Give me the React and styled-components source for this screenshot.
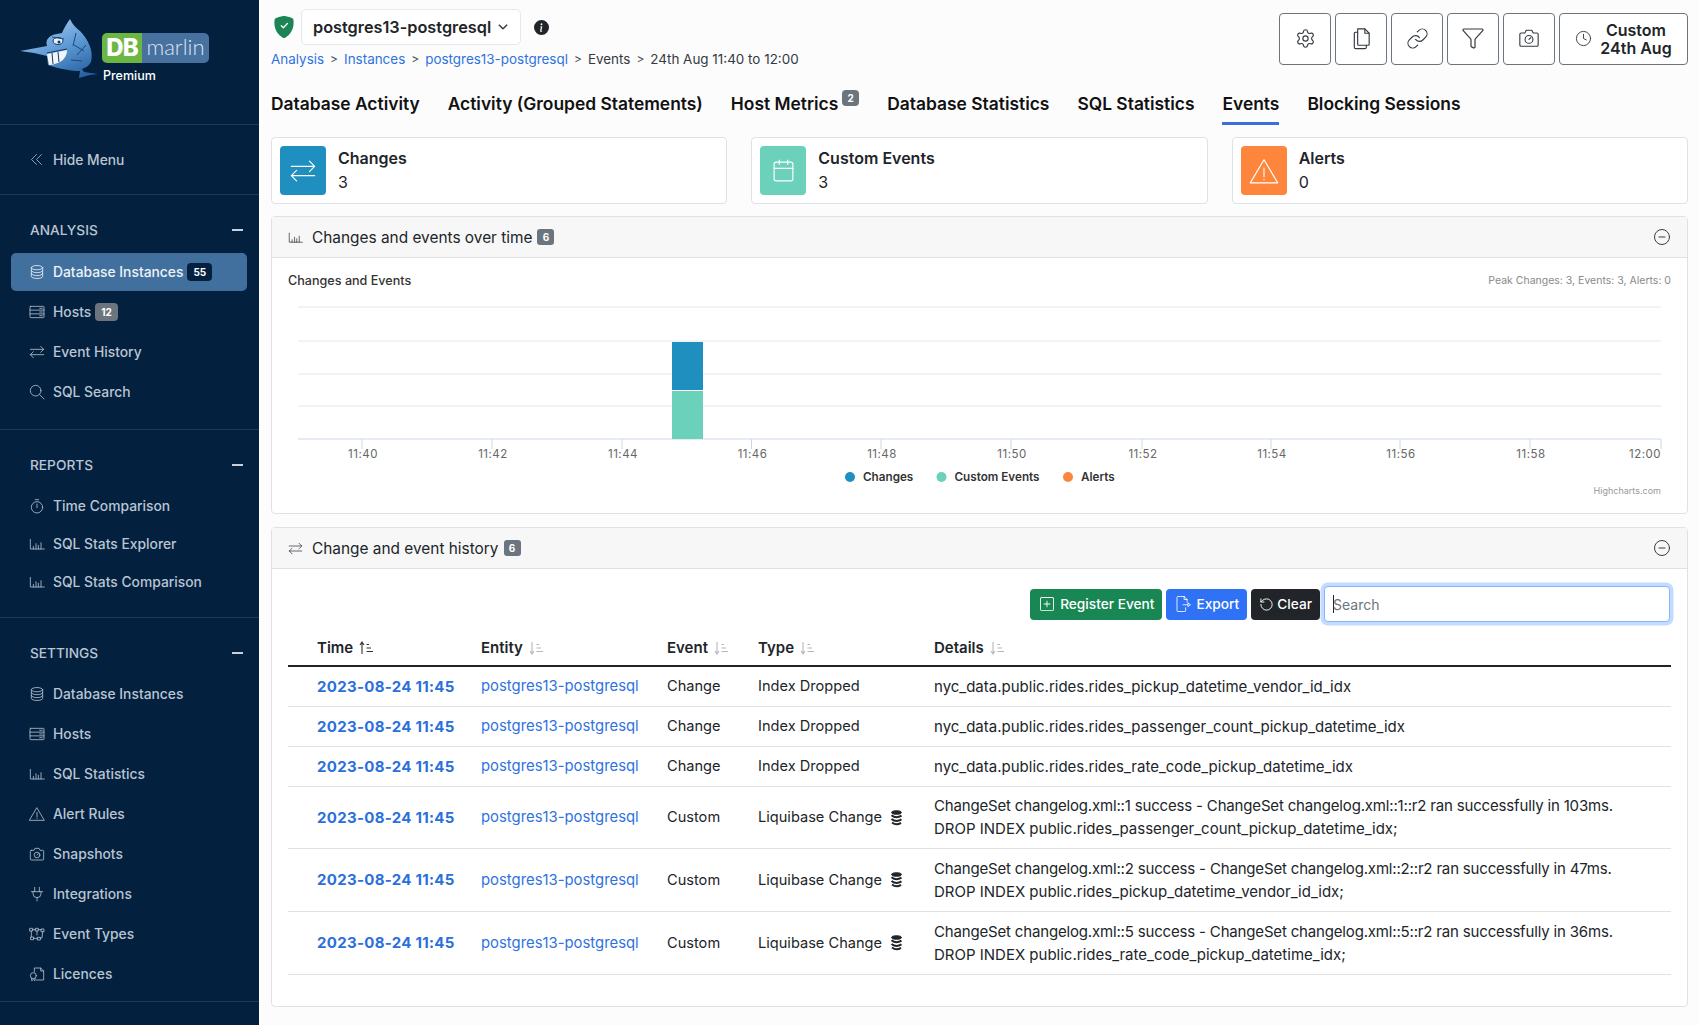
import React from "react";
import styled, { createGlobalStyle } from "styled-components";
import { BsShieldFillCheck, BsInfoCircleFill, BsChevronDown, BsPlusSquare } from "react-icons/bs";
import { Settings, Link, Funnel, Clock, CircleMinus, Calendar, RotateCcw } from "lucide-react";

const GlobalStyle = createGlobalStyle`
  html, body {
    margin: 0;
    padding: 0;
    height: 100%;
    overflow: hidden;
    background: #fcfcfd;
    font-family: Inter, "Liberation Sans", sans-serif;
    color: #212529;
  }
  * { box-sizing: border-box; }
`;

const Page = styled.div`
  display: flex;
  height: 1025px;
`;

/* sidebar */
const Sidebar = styled.aside`
  width: 259px;
  flex: none;
  background: #03203e;
  color: #b9c5d3;
`;

const LogoArea = styled.div`
  height: 125px;
  padding: 15px 0 0 14px;
  display: flex;
  border-bottom: 1px solid #1f3a57;
`;

const LogoRight = styled.div`
  margin-top: 18px;
`;

const LogoBadge = styled.div`
  display: flex;
  width: 107px;
  height: 30px;
  border-radius: 5px;
  overflow: hidden;
`;

const LogoDb = styled.div`
  width: 40px;
  background: #6cb644;
  color: #fff;
  font-weight: 800;
  font-size: 24px;
  line-height: 30px;
  text-align: center;
  letter-spacing: -1px;
`;

const LogoName = styled.div`
  flex: 1;
  background: #47719f;
  color: #dce6f0;
  font-family: Lato, sans-serif;
  font-weight: 300;
  font-size: 22px;
  line-height: 28px;
  text-align: center;
`;

const Premium = styled.div`
  margin: 5px 0 0 1px;
  font-size: 12.5px;
  line-height: 16px;
  font-weight: 500;
  color: #fff;
`;

const HideRow = styled.div`
  height: 70px;
  padding-left: 29px;
  display: flex;
  align-items: center;
  gap: 9px;
  font-size: 13.8px;
  font-weight: 500;
  border-bottom: 1px solid #1f3a57;
`;

const Section = styled.section`
  padding: 20px 0 ${(p) => p.$bottom}px;
  border-bottom: 1px solid #1f3a57;
`;

const SectionHead = styled.div`
  height: 30px;
  padding: 0 16px 0 30px;
  display: flex;
  align-items: center;
  justify-content: space-between;
  font-size: 13.7px;
  font-weight: 500;
  margin-bottom: ${(p) => p.$gap}px;
`;

const Dash = styled.span`
  width: 11px;
  height: 1.5px;
  background: #c5d0dc;
`;

const MenuItem = styled.div`
  height: ${(p) => p.$h}px;
  display: flex;
  align-items: center;
  padding: 0 29px;
  gap: 8px;
  font-size: 13.85px;
  font-weight: 500;
  white-space: nowrap;
  position: relative;
  color: ${(p) => (p.$active ? "#eef3f8" : "#b9c5d3")};
  &::before {
    content: "";
    display: ${(p) => (p.$active ? "block" : "none")};
    position: absolute;
    left: 11px;
    right: 12px;
    top: 1px;
    bottom: 1px;
    background: #41709f;
    border-radius: 5px;
  }
  > * {
    position: relative;
  }
`;

const MenuBadge = styled.span`
  margin-left: -4px;
  padding: 0 6px;
  height: 18px;
  line-height: 18px;
  border-radius: 4px;
  font-size: 10px;
  font-weight: 700;
  color: #fff;
  background: ${(p) => (p.$dark ? "#03203e" : "#6c757d")};
`;

const Glyph = styled.svg`
  width: ${(p) => p.$size || 16}px;
  height: ${(p) => p.$size || 16}px;
  flex: none;
  fill: none;
  stroke: currentColor;
  stroke-width: ${(p) => p.$stroke || 1.2};
  stroke-linecap: round;
  stroke-linejoin: round;
`;

const Line = ({ size, stroke, children }) => (
  <Glyph viewBox="0 0 24 24" $size={size} $stroke={stroke}>
    {children}
  </Glyph>
);

const ChevronsIcon = (p) => (
  <Line {...p}><path d="M12 4 4 12l8 8M20 4l-8 8 8 8" /></Line>
);
const DatabaseIcon = (p) => (
  <Line {...p}>
    <ellipse cx="12" cy="5.5" rx="8.5" ry="3.2" />
    <path d="M3.5 5.5v13c0 1.8 3.8 3.2 8.5 3.2s8.5-1.4 8.5-3.2v-13" />
    <path d="M3.5 9.8c0 1.8 3.8 3.2 8.5 3.2s8.5-1.4 8.5-3.2M3.5 14.2c0 1.8 3.8 3.2 8.5 3.2s8.5-1.4 8.5-3.2" />
  </Line>
);
const ServerIcon = (p) => (
  <Line {...p}>
    <rect x="1.5" y="3.5" width="21" height="17" rx="1" />
    <path d="M1.5 9.2h21M1.5 14.8h21M16 6.4h4M16 12h4M16 17.6h4" />
  </Line>
);
const SwapIcon = (p) => (
  <Line {...p}><path d="M2 8h20M17.5 3.5 22 8l-4.5 4.5M22 16H2M6.5 11.5 2 16l4.5 4.5" /></Line>
);
const SearchIcon = (p) => (
  <Line {...p}>
    <circle cx="10" cy="10" r="8" />
    <path d="m16 16 6.5 6.5" />
  </Line>
);
const TimerIcon = (p) => (
  <Line {...p}>
    <circle cx="12" cy="14" r="8.5" />
    <path d="M9.5 2.5h5M12 9v5.5" />
  </Line>
);
const BarsIcon = (p) => (
  <Line {...p}><path d="M2 5v14.5h21M6.5 15.5v4M10.5 11.5v8M14 14v5.5M18 10v9.5" /></Line>
);
const AlertIcon = (p) => (
  <Line {...p}>
    <path d="M12 3 23 21.5H1z" />
    <path d="M12 9.5v7M12 18.8v.2" />
  </Line>
);
const CameraIcon = (p) => (
  <Line {...p}>
    <path d="M3.5 6.5h4l1.5-3h6l1.5 3h4A1.5 1.5 0 0 1 22 8v11.5a1.5 1.5 0 0 1-1.5 1.5h-17A1.5 1.5 0 0 1 2 19.5V8a1.5 1.5 0 0 1 1.5-1.5z" />
    <circle cx="12" cy="13.5" r="4.3" />
    <path d="M12 13.5l2-2" />
  </Line>
);
const PlugIcon = (p) => (
  <Line {...p}>
    <path d="M8.5 2v6.5M15.5 2v6.5M3.5 8.5h17M6 8.5v3a6 6 0 0 0 12 0v-3M12 17.5v5" />
  </Line>
);
const ObjectsIcon = (p) => (
  <Line {...p}>
    <path d="M1.5 3.5h4v4h-4zM10 3.5h4v4h-4zM18.5 4.5h4v4h-4zM3 16.5h4v4H3zM13 17h4v4h-4z" />
    <path d="M5.5 5.5H10M14 5.5h4.5M3.5 7.5v9M20.5 8.5l-1 9.5H17M7 18.5h6M12 7.5v6" />
  </Line>
);
const LicenceIcon = (p) => (
  <Line {...p}>
    <path d="M8 9V3h9.5L22 7.5V21H11" />
    <path d="M17.5 3v4.5H22" />
    <circle cx="6.5" cy="14.5" r="4.5" />
    <path d="M4 18.5V22l2.5-1.5L9 22v-3.5" />
  </Line>
);
const CopyIcon = (p) => (
  <Line {...p}>
    <path d="M8 2h7.5L20 6.5V18a1 1 0 0 1-1 1H9a1 1 0 0 1-1-1z" />
    <path d="M15.5 2v4.5H20M8 5.5H5.5a1 1 0 0 0-1 1V21A1.5 1.5 0 0 0 6 22.5h9.5A1.5 1.5 0 0 0 17 21v-2" />
  </Line>
);
const ExportIcon = (p) => (
  <Line {...p}>
    <path d="M13.5 2H5a1 1 0 0 0-1 1v18a1 1 0 0 0 1 1h9.5a1 1 0 0 0 1-1v-4M13.5 2l4 4v3.5M13.5 2v4h4" />
    <path d="M12 13h6.5v-2.5L22 13l-3.5 2.5V13" />
  </Line>
);

const SortSvg = styled.svg`
  width: 16px;
  height: 16px;
  margin-left: 5px;
  vertical-align: -3px;
  fill: none;
  stroke: ${(p) => (p.$on ? "#333" : "#b4b8bd")};
  stroke-width: 1.1;
`;

const SortIcon = ({ dir, on }) => (
  <SortSvg viewBox="0 0 16 16" $on={on}>
    {dir === "up" ? <path d="M4 14V2M2 5l2-3 2 3" /> : <path d="M4 2v12M2 11l2 3 2-3" />}
    <path d="M8.5 4.5H11M8.5 8H13M8.5 11.5H15" />
  </SortSvg>
);

const Marlin = () => (
  <svg width="88" height="70" viewBox="0 0 88 70">
    <defs>
      <linearGradient id="fish" x1="0.2" y1="0" x2="0.8" y2="1">
        <stop offset="0" stopColor="#a8cdee" />
        <stop offset="0.5" stopColor="#5f9ad6" />
        <stop offset="1" stopColor="#24609f" />
      </linearGradient>
    </defs>
    <path
      d="M6 36 33 31C31 25 35 20 43 19L48 18C50 13 53 8 56 4 58 9 62 13 66 16 74 24 80 36 77 47 75 51 71 53 68 54L70 57 84 59 76 60 65 63 66 56C58 56 46 54 34 50L33 41 20 38z"
      fill="url(#fish)"
    />
    <path d="M33 39 53 35C53 43 47 49 35 50z" fill="#f2f5f8" />
    <path d="M33 38 53 34M38 38 39 49M44 37 45 47" stroke="#123a66" strokeWidth="1" fill="none" />
    <ellipse cx="44" cy="26" rx="5" ry="3.5" fill="#e6edf3" stroke="#123a66" />
    <circle cx="45" cy="27" r="1.5" fill="#123a66" />
    <path d="M38 22 50 24M62 18 59 31M72 30 63 40M68 46 57 45M60 30 70 36" stroke="#1a4a7e" strokeWidth="1" fill="none" />
  </svg>
);

const NavGroup = ({ items, h }) =>
  items.map((it) => (
    <MenuItem key={it.label} $h={h} $active={it.active}>
      <it.icon />
      <span>{it.label}</span>
      {it.badge && <MenuBadge $dark={it.active}>{it.badge}</MenuBadge>}
    </MenuItem>
  ));

const analysisNav = [
  { label: "Database Instances", icon: DatabaseIcon, badge: "55", active: true },
  { label: "Hosts", icon: ServerIcon, badge: "12" },
  { label: "Event History", icon: SwapIcon },
  { label: "SQL Search", icon: SearchIcon },
];
const reportsNav = [
  { label: "Time Comparison", icon: TimerIcon },
  { label: "SQL Stats Explorer", icon: BarsIcon },
  { label: "SQL Stats Comparison", icon: BarsIcon },
];
const settingsNav = [
  { label: "Database Instances", icon: DatabaseIcon },
  { label: "Hosts", icon: ServerIcon },
  { label: "SQL Statistics", icon: BarsIcon },
  { label: "Alert Rules", icon: AlertIcon },
  { label: "Snapshots", icon: CameraIcon },
  { label: "Integrations", icon: PlugIcon },
  { label: "Event Types", icon: ObjectsIcon },
  { label: "Licences", icon: LicenceIcon },
];

/* main */
const Main = styled.main`
  flex: 1;
  min-width: 0;
  padding: 0 11px 0 12px;
`;

const Header = styled.header`
  height: 85px;
  display: flex;
  justify-content: space-between;
`;

const SelectRow = styled.div`
  display: flex;
  align-items: center;
  height: 36px;
  margin-top: 9px;
  padding-left: 2px;
`;

const Shield = styled(BsShieldFillCheck)`
  color: #1a8457;
  font-size: 22px;
`;

const DbSelect = styled.div`
  width: 220px;
  height: 36px;
  margin-left: 6px;
  padding: 0 12px 0 11px;
  display: flex;
  align-items: center;
  justify-content: space-between;
  background: #fff;
  border: 1px solid #e6e8eb;
  border-radius: 5px;
  font-size: 16.3px;
  font-weight: 600;
`;

const InfoDot = styled(BsInfoCircleFill)`
  margin-left: 13px;
  font-size: 15px;
  color: #212529;
`;

const Crumbs = styled.nav`
  margin-top: 5px;
  display: flex;
  align-items: center;
  font-size: 13.45px;
  line-height: 18px;
`;

const Crumb = styled.span`
  color: ${(p) => (p.$link ? "#2f72e0" : "#343a40")};
`;

const CrumbSep = styled.span`
  margin: 0 6px;
  color: #495057;
  font-size: 12px;
`;

const Actions = styled.div`
  display: flex;
  gap: 4px;
  margin-top: 13px;
  height: 52px;
`;

const ActionBtn = styled.div`
  width: ${(p) => p.$w || 52}px;
  padding-bottom: 2px;
  display: flex;
  align-items: center;
  justify-content: center;
  gap: 8px;
  background: #fff;
  border: 1px solid #6c757d;
  border-radius: 4px;
  color: #343a40;
`;

const DateText = styled.div`
  margin-top: 2px;
  font-size: 16px;
  line-height: 18px;
  font-weight: 600;
  text-align: center;
  color: #212529;
`;

const Tabs = styled.div`
  height: 40px;
  display: flex;
  gap: 28px;
`;

const Tab = styled.div`
  height: 40px;
  display: flex;
  align-items: flex-start;
  padding-top: 8px;
  font-size: 17.4px;
  line-height: 22px;
  font-weight: 600;
  color: #111;
  white-space: nowrap;
  border-bottom: 3px solid ${(p) => (p.$active ? "#3a6fdc" : "transparent")};
`;

const TabBadge = styled.span`
  margin: -3px 0 0 4px;
  width: 17px;
  height: 16px;
  line-height: 16px;
  text-align: center;
  border-radius: 4px;
  background: #6c757d;
  color: #fff;
  font-size: 10px;
  font-weight: 700;
`;

const Cards = styled.div`
  display: grid;
  grid-template-columns: repeat(3, 1fr);
  gap: 24px;
  margin-top: 12px;
`;

const Card = styled.div`
  height: 67px;
  padding: 8px;
  display: flex;
  gap: 12px;
  background: #fff;
  border: 1px solid #dee2e6;
  border-radius: 4px;
`;

const CardIcon = styled.div`
  width: 46px;
  height: 49px;
  display: flex;
  align-items: center;
  justify-content: center;
  border-radius: 4px;
  color: #fff;
  background: ${(p) => p.$bg};
`;

const CardTitle = styled.div`
  font-size: 16px;
  line-height: 24px;
  font-weight: 600;
`;

const CardValue = styled.div`
  font-size: 16px;
  line-height: 24px;
`;

const Panel = styled.section`
  margin-top: ${(p) => p.$top}px;
  height: ${(p) => p.$h}px;
  background: #fff;
  border: 1px solid #dee2e6;
  border-radius: 4px;
`;

const PanelHead = styled.div`
  height: 41px;
  padding: 0 16px;
  display: flex;
  align-items: center;
  gap: 9px;
  background: #f7f7f7;
  border-bottom: 1px solid #dee2e6;
  color: #343a40;
  font-size: 15.4px;
`;

const PanelTitle = styled.span`
  display: flex;
  align-items: center;
  gap: 5px;
  flex: 1;
  color: #212529;
`;

const CountBadge = styled.span`
  width: 17px;
  height: 16px;
  line-height: 16px;
  text-align: center;
  border-radius: 3px;
  background: #6c757d;
  color: #fff;
  font-size: 10px;
  font-weight: 700;
`;

const ChartSvg = styled.svg`
  display: block;
  font-family: Inter, sans-serif;
`;

const gridLines = [49, 83, 116, 148];
const tickX = [90, 220, 350, 479.5, 609, 739, 870, 999, 1128, 1258, 1389];
const tickLabels = ["11:40", "11:42", "11:44", "11:46", "11:48", "11:50", "11:52", "11:54", "11:56", "11:58", "12:00"];
const legend = [
  { label: "Changes", color: "#1f8fbf", x: 578 },
  { label: "Custom Events", color: "#6bd1bb", x: 669.5 },
  { label: "Alerts", color: "#fd853c", x: 796 },
];

const EventsChart = () => (
  <ChartSvg width="1415" height="255" viewBox="0 0 1415 255">
    <text x="16" y="27" fontSize="12.6" fontWeight="500" fill="#333">Changes and Events</text>
    <text x="1399" y="26" fontSize="10.5" textAnchor="end" fill="#8a8a8a">Peak Changes: 3, Events: 3, Alerts: 0</text>
    {gridLines.map((y) => (
      <line key={y} x1="26" x2="1389" y1={y} y2={y} stroke="#e6e6e6" />
    ))}
    <line x1="26" x2="1389" y1="181" y2="181" stroke="#ccd6eb" />
    {tickX.map((x, i) => (
      <g key={x}>
        <line x1={x} x2={x} y1="181" y2="191" stroke="#ccd6eb" />
        <text x={i === 10 ? 1373 : x + 1} y="200" fontSize="11.5" letterSpacing="0.5" textAnchor="middle" fill="#666">{tickLabels[i]}</text>
      </g>
    ))}
    <rect x="400" y="84" width="31" height="48" fill="#1f8fbf" />
    <rect x="400" y="133" width="31" height="48" fill="#6bd1bb" />
    {legend.map((l) => (
      <g key={l.label}>
        <circle cx={l.x} cy="219" r="5" fill={l.color} />
        <text x={l.x + 13} y="223" fontSize="11.7" fontWeight="600" fill="#333">{l.label}</text>
      </g>
    ))}
    <text x="1389" y="236" fontSize="9" textAnchor="end" fill="#999">Highcharts.com</text>
  </ChartSvg>
);

const Toolbar = styled.div`
  height: 36px;
  margin: 17px 17px 0 16px;
  display: flex;
  align-items: center;
  justify-content: flex-end;
  gap: 4px;
`;

const ToolBtn = styled.div`
  height: 31px;
  padding: 0 8px 0 ${(p) => p.$left || 10}px;
  display: flex;
  align-items: center;
  gap: ${(p) => p.$gap || 6}px;
  border-radius: 4px;
  background: ${(p) => p.$bg};
  color: #fff;
  font-size: 13.7px;
  font-weight: 500;
  white-space: nowrap;
`;

const SearchWrap = styled.div`
  position: relative;
  width: 346px;
  height: 36px;
`;

const SearchBox = styled.input`
  display: block;
  width: 100%;
  height: 100%;
  padding: 0 8px;
  border: 1px solid #86b7fe;
  border-radius: 4px;
  box-shadow: 0 0 0 3.5px #c2dbfe;
  outline: none;
  background: #fff;
  font: 14px Inter, sans-serif;
  &::placeholder {
    color: #6c757d;
  }
`;

const Caret = styled.span`
  position: absolute;
  left: 9px;
  top: 9px;
  width: 1px;
  height: 18px;
  background: #212529;
`;

const Table = styled.table`
  width: 1383px;
  margin: 4px 0 0 16px;
  border-collapse: collapse;
  table-layout: fixed;
  font-size: 14.6px;
`;

const Th = styled.th`
  height: 40px;
  padding: 3px 0 0 ${(p) => p.$pad || 0}px;
  text-align: left;
  font-size: 15px;
  font-weight: 600;
  border-bottom: 2px solid #212529;
`;

const Tr = styled.tr`
  height: ${(p) => p.$h}px;
  border-bottom: 1px solid #dee2e6;
`;

const Td = styled.td`
  padding: 1px 0 0 ${(p) => p.$pad || 0}px;
  line-height: 23px;
  color: #212529;
`;

const DetailCell = styled.td`
  padding: 0;
  line-height: 23px;
  color: #212529;
`;

const DateLink = styled.a`
  font-size: 15px;
  font-weight: 700;
  letter-spacing: 0.3px;
  color: #2a6fdb;
`;

const EntityLink = styled.a`
  font-size: 14.85px;
  color: #2f72e0;
`;

const TypeCell = styled.span`
  display: inline-flex;
  align-items: center;
  gap: 8px;
`;

const DetailLine = styled.div`
  font-size: 15px;
  letter-spacing: ${(p) => (p.$tight ? "-0.17px" : "0")};
`;

const Liquibase = () => (
  <svg width="13" height="16" viewBox="0 0 13 16" fill="none" stroke="#212529" strokeWidth="2">
    <ellipse cx="6.5" cy="2.5" rx="5" ry="1.8" fill="#212529" strokeWidth="1" />
    <path d="M1.5 5.2c3 2.5 7 2.3 10 .4M1.5 9c3 2.5 7 2.3 10 .4M2 12.5c3 2.5 6 2.3 9 .4" />
  </svg>
);

const rows = [
  { kind: "Change", type: "Index Dropped", h: 40, details: ["nyc_data.public.rides.rides_pickup_datetime_vendor_id_idx"] },
  { kind: "Change", type: "Index Dropped", h: 40, details: ["nyc_data.public.rides.rides_passenger_count_pickup_datetime_idx"] },
  { kind: "Change", type: "Index Dropped", h: 40, details: ["nyc_data.public.rides.rides_rate_code_pickup_datetime_idx"] },
  {
    kind: "Custom", type: "Liquibase Change", h: 62,
    details: ["ChangeSet changelog.xml::1 success - ChangeSet changelog.xml::1::r2 ran successfully in 103ms.", "DROP INDEX public.rides_passenger_count_pickup_datetime_idx;"],
  },
  {
    kind: "Custom", type: "Liquibase Change", h: 63,
    details: ["ChangeSet changelog.xml::2 success - ChangeSet changelog.xml::2::r2 ran successfully in 47ms.", "DROP INDEX public.rides_pickup_datetime_vendor_id_idx;"],
  },
  {
    kind: "Custom", type: "Liquibase Change", h: 63,
    details: ["ChangeSet changelog.xml::5 success - ChangeSet changelog.xml::5::r2 ran successfully in 36ms.", "DROP INDEX public.rides_rate_code_pickup_datetime_idx;"],
  },
];

const crumbs = [
  { text: "Analysis", link: true },
  { text: "Instances", link: true },
  { text: "postgres13-postgresql", link: true },
  { text: "Events" },
  { text: "24th Aug 11:40 to 12:00" },
];

const tabs = ["Database Activity", "Activity (Grouped Statements)", "Host Metrics", "Database Statistics", "SQL Statistics", "Events", "Blocking Sessions"];

const App = () => (
  <Page>
    <GlobalStyle />
    <Sidebar>
      <LogoArea>
        <Marlin />
        <LogoRight>
          <LogoBadge>
            <LogoDb>DB</LogoDb>
            <LogoName>marlin</LogoName>
          </LogoBadge>
          <Premium>Premium</Premium>
        </LogoRight>
      </LogoArea>
      <HideRow>
        <ChevronsIcon size={15} />
        Hide Menu
      </HideRow>
      <Section $bottom={17}>
        <SectionHead $gap={7}>ANALYSIS<Dash /></SectionHead>
        <NavGroup items={analysisNav} h={40} />
      </Section>
      <Section $bottom={16}>
        <SectionHead $gap={7}>REPORTS<Dash /></SectionHead>
        <NavGroup items={reportsNav} h={38} />
      </Section>
      <Section $bottom={7}>
        <SectionHead $gap={6}>SETTINGS<Dash /></SectionHead>
        <NavGroup items={settingsNav} h={40} />
      </Section>
    </Sidebar>

    <Main>
      <Header>
        <div>
          <SelectRow>
            <Shield />
            <DbSelect>
              postgres13-postgresql
              <BsChevronDown size={10} strokeWidth={1.5} />
            </DbSelect>
            <InfoDot />
          </SelectRow>
          <Crumbs>
            {crumbs.map((c, i) => (
              <React.Fragment key={c.text}>
                {i > 0 && <CrumbSep>&gt;</CrumbSep>}
                <Crumb $link={c.link}>{c.text}</Crumb>
              </React.Fragment>
            ))}
          </Crumbs>
        </div>
        <Actions>
          <ActionBtn><Settings size={21} strokeWidth={1.3} /></ActionBtn>
          <ActionBtn><CopyIcon size={23} stroke={1.2} /></ActionBtn>
          <ActionBtn><Link size={23} strokeWidth={1.2} /></ActionBtn>
          <ActionBtn><Funnel size={24} strokeWidth={1.2} /></ActionBtn>
          <ActionBtn><CameraIcon size={22} stroke={1.2} /></ActionBtn>
          <ActionBtn $w={129}>
            <Clock size={17} strokeWidth={1.3} />
            <DateText>Custom<br />24th Aug</DateText>
          </ActionBtn>
        </Actions>
      </Header>

      <Tabs>
        {tabs.map((t) => (
          <Tab key={t} $active={t === "Events"}>
            {t}
            {t === "Host Metrics" && <TabBadge>2</TabBadge>}
          </Tab>
        ))}
      </Tabs>

      <Cards>
        <Card>
          <CardIcon $bg="#1f8fbf"><SwapIcon size={28} stroke={1} /></CardIcon>
          <div><CardTitle>Changes</CardTitle><CardValue>3</CardValue></div>
        </Card>
        <Card>
          <CardIcon $bg="#6bd1bb"><Calendar size={25} strokeWidth={1.1} /></CardIcon>
          <div><CardTitle>Custom Events</CardTitle><CardValue>3</CardValue></div>
        </Card>
        <Card>
          <CardIcon $bg="#fd853c"><AlertIcon size={30} stroke={0.9} /></CardIcon>
          <div><CardTitle>Alerts</CardTitle><CardValue>0</CardValue></div>
        </Card>
      </Cards>

      <Panel $top={12} $h={298}>
        <PanelHead>
          <BarsIcon size={15} />
          <PanelTitle>Changes and events over time <CountBadge>6</CountBadge></PanelTitle>
          <CircleMinus size={18} strokeWidth={1.3} />
        </PanelHead>
        <EventsChart />
      </Panel>

      <Panel $top={13} $h={480}>
        <PanelHead>
          <SwapIcon size={15} />
          <PanelTitle>Change and event history <CountBadge>6</CountBadge></PanelTitle>
          <CircleMinus size={18} strokeWidth={1.3} />
        </PanelHead>
        <Toolbar>
          <ToolBtn $bg="#198754"><BsPlusSquare size={14} />Register Event</ToolBtn>
          <ToolBtn $bg="#2f72f5" $gap={4} $left={8}><ExportIcon size={18} stroke={1.1} />Export</ToolBtn>
          <ToolBtn $bg="#212529" $gap={3} $left={8}><RotateCcw size={15} strokeWidth={1.5} />Clear</ToolBtn>
          <SearchWrap>
            <SearchBox placeholder="Search" readOnly />
            <Caret />
          </SearchWrap>
        </Toolbar>
        <Table>
          <colgroup>
            <col width="193" />
            <col width="186" />
            <col width="91" />
            <col width="176" />
            <col />
          </colgroup>
          <thead>
            <tr>
              <Th $pad={29}>Time<SortIcon dir="up" on /></Th>
              <Th>Entity<SortIcon /></Th>
              <Th>Event<SortIcon /></Th>
              <Th>Type<SortIcon /></Th>
              <Th>Details<SortIcon /></Th>
            </tr>
          </thead>
          <tbody>
            {rows.map((r, i) => (
              <Tr key={i} $h={r.h}>
                <Td $pad={29}><DateLink>2023-08-24 11:45</DateLink></Td>
                <Td><EntityLink>postgres13-postgresql</EntityLink></Td>
                <Td>{r.kind}</Td>
                <Td>
                  <TypeCell>{r.type}{r.kind === "Custom" && <Liquibase />}</TypeCell>
                </Td>
                <DetailCell>
                  {r.details.map((d) => (
                    <DetailLine key={d} $tight={d.startsWith("ChangeSet")}>{d}</DetailLine>
                  ))}
                </DetailCell>
              </Tr>
            ))}
          </tbody>
        </Table>
      </Panel>
    </Main>
  </Page>
);

export default App;
